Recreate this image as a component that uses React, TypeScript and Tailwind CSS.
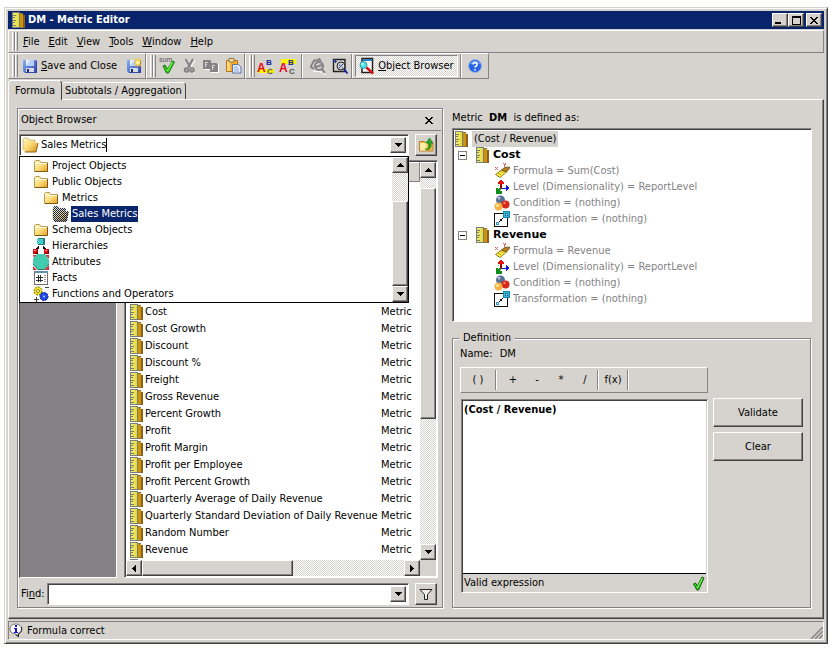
import { useState, type ReactNode } from "react";

const METRICS = [
  "Cost",
  "Cost Growth",
  "Discount",
  "Discount %",
  "Freight",
  "Gross Revenue",
  "Percent Growth",
  "Profit",
  "Profit Margin",
  "Profit per Employee",
  "Profit Percent Growth",
  "Quarterly Average of Daily Revenue",
  "Quarterly Standard Deviation of Daily Revenue",
  "Random Number",
  "Revenue",
];

const MENUS = ["File", "Edit", "View", "Tools", "Window", "Help"];

const raised = "border border-t-white border-l-white border-r-[#848284] border-b-[#848284]";
const button3d =
  "bg-[#d6d3ce] border border-t-white border-l-white border-r-[#424142] border-b-[#424142] shadow-[inset_-1px_-1px_0_#848284]";
const sunken =
  "border border-t-[#848284] border-l-[#848284] border-r-white border-b-white shadow-[inset_1px_1px_0_#424142]";
const groove =
  "border border-[#848284] shadow-[inset_1px_1px_0_#ffffff,1px_1px_0_#ffffff]";
const dither =
  "bg-[repeating-conic-gradient(#ffffff_0_25%,#d6d3ce_0_50%)] bg-[length:2px_2px]";

/* ---------- icons ---------- */

function MetricIcon() {
  return (
    <svg width="13" height="16" viewBox="0 0 13 16" shapeRendering="crispEdges" className="shrink-0">
      <defs>
        <linearGradient id="ruler" x1="0" y1="0" x2="1" y2="0">
          <stop offset="0" stopColor="#f2ec86" />
          <stop offset="1" stopColor="#e4dc30" />
        </linearGradient>
      </defs>
      <path d="M11 3h2v13h-2z" fill="#8c6018" />
      <path d="M7 1h4v15H7z" fill="#8c7442" />
      <path d="M8 2h3v13H8z" fill="#cc9212" />
      <path d="M0 0h8v16H0z" fill="#7b7d7b" />
      <path d="M1 1h6v14H1z" fill="url(#ruler)" />
      <path d="M1 3h3v1H1zM1 5h2v1H1zM1 8h3v1H1zM1 10h2v1H1zM1 13h3v1H1z" fill="#7b7d5a" />
    </svg>
  );
}

function FolderIcon() {
  return (
    <svg width="16" height="16" viewBox="0 0 16 16" className="shrink-0">
      <defs>
        <linearGradient id="folder" x1="0" y1="0" x2="1" y2="1">
          <stop offset="0" stopColor="#fff6c4" />
          <stop offset=".5" stopColor="#fbdc7c" />
          <stop offset="1" stopColor="#e8a020" />
        </linearGradient>
      </defs>
      <path d="M1.500 13.500V3.500l1-1h4l1.500 2H14.500v9z" fill="url(#folder)" stroke="#b59a5a" />
      <path d="M2 5.500h12" stroke="#fffbe0" />
      <path d="M2 13.500h12.500V5" stroke="#7b5a18" fill="none" />
    </svg>
  );
}

function OpenFolderIcon({ selected = false }: { selected?: boolean }) {
  return (
    <svg width="17" height="16" viewBox="0 0 17 16" className="shrink-0">
      <defs>
        <linearGradient id="openFolder" x1="0" y1="0" x2="1" y2="1">
          <stop offset="0" stopColor="#fff7c6" />
          <stop offset=".5" stopColor="#fbd873" />
          <stop offset="1" stopColor="#d68a10" />
        </linearGradient>
        <pattern id="selDots" width="2" height="2" patternUnits="userSpaceOnUse">
          <path d="M0 0h1v1H0zM1 1h1v1H1z" fill="#08246b" shapeRendering="crispEdges" />
        </pattern>
      </defs>
      <path d="M1 13V3l1-2h4l1 2h6v3h3l-2 9H3z" fill="url(#openFolder)" />
      <path d="M1 13V3l1-2h4l1 2h6v3" fill="none" stroke="#d6c083" />
      <path d="M3 15h11l2-9" fill="none" stroke="#8c6518" />
      {selected && <path d="M1 13V3l1-3h4l1 2h7v3h3l-2 11H2z" fill="url(#selDots)" />}
    </svg>
  );
}

function HierarchyIcon() {
  return (
    <svg width="16" height="16" viewBox="0 0 16 16" shapeRendering="crispEdges" className="shrink-0">
      <path d="M5 0h7v7H5z" fill="#297d84" />
      <path d="M4 1h6v5H4z" fill="#4accc6" />
      <path d="M5 8h1v1H5zM4 9h2v1H4zM3 10h3v1H3zM10 8h1v1h-1zM10 9h2v1h-2zM10 10h3v1h-3z" fill="#101010" />
      <path d="M0 11h5v5H0zM11 11h5v5h-5z" fill="#d61010" />
      <path d="M1 12h2v1H1zM12 12h2v1h-2z" fill="#ff9a94" />
      <path d="M4 12h1v4H1v-1h3zM15 12h1v4h-4v-1h3z" fill="#840000" />
    </svg>
  );
}

function AttributeIcon() {
  return (
    <svg width="16" height="16" viewBox="0 0 16 16" className="shrink-0">
      <path d="M0 1h4L1 4zM12 1h4v4zM0 12l4 4H0zM16 11v5h-5z" fill="#d63139" />
      <path d="M4 0h8l4 6v4l-5 6H5L0 10V5z" fill="#42cbad" />
      <path d="M0 10l5 5.500h6l5-5.500" fill="none" stroke="#218273" />
    </svg>
  );
}

function FactIcon() {
  return (
    <svg width="16" height="16" viewBox="0 0 16 16" shapeRendering="crispEdges" className="shrink-0">
      <path d="M1 1h14v14H1z" fill="#737173" />
      <path d="M2 3h12v11H2z" fill="#fff" />
      <path d="M2 1h13v2H2z" fill="#6390ad" />
      <path d="M5 5h1v7H5zM7 5h1v7H7zM3 7h7v1H3zM3 10h7v1H3z" fill="#313031" />
      <path d="M11 5h2v1h-2zM11 7h2v1h-2zM11 9h2v1h-2zM11 11h2v1h-2z" fill="#9c9a9c" />
    </svg>
  );
}

function FunctionIcon() {
  return (
    <svg width="16" height="16" viewBox="0 0 16 16" className="shrink-0">
      <circle cx="5" cy="5" r="4" fill="#f7e729" stroke="#6b6500" strokeDasharray="2 1" />
      <circle cx="5" cy="5" r="1.500" fill="#fff" stroke="#8c8600" />
      <circle cx="11" cy="10.500" r="4" fill="#2149e7" stroke="#001094" strokeDasharray="2 1" />
      <circle cx="11" cy="10.500" r="1" fill="#b5c7ff" />
      <path d="M12 1.500h4M1 13.500h5M3.500 11v5" stroke="#424142" />
    </svg>
  );
}

function FormulaIcon() {
  return (
    <svg width="16" height="16" viewBox="0 0 16 16" className="shrink-0">
      <path d="M1.500 11.500l6-4.500 5 2-6.500 5.500z" fill="#ffef42" stroke="#8c7d29" />
      <path d="M7.500 7l3-2.500 5-.5v1.500l-3 3.500z" fill="#b57918" stroke="#6b5221" strokeWidth=".8" />
      <path d="M4 10.500l3 1M6.500 8.500l3 1.200" stroke="#a59218" strokeWidth=".8" />
      <path d="M1 4l3 3M4 4L1 7M9 0l1.500 1.500M12 0l-1.500 1.500V4" stroke="#ef5a63" />
    </svg>
  );
}

function LevelIcon() {
  return (
    <svg width="16" height="16" viewBox="0 0 16 16" shapeRendering="crispEdges" className="shrink-0">
      <path d="M6 5h2v5H6z" fill="#a50000" />
      <path d="M6 1h2v1h1v1h1v2H4V3h1V2h1z" fill="#e71010" />
      <path d="M8 9h4V6h1v1h1v1h1v2h-1v1h-1v1h-1v-2H8z" fill="#1018e7" />
      <path d="M2 9h2v1h1V9h2v2H6v1h2v3H2z" fill="#108a18" />
      <path d="M4 6h1v1H4z" fill="#42c3c6" />
    </svg>
  );
}

function ConditionIcon() {
  return (
    <svg width="16" height="16" viewBox="0 0 16 16" className="shrink-0">
      <circle cx="6.500" cy="5" r="4.500" fill="#5a6d94" />
      <circle cx="5" cy="3" r="1.500" fill="#b5c3d6" />
      <circle cx="11.500" cy="9.500" r="4" fill="#d62818" />
      <circle cx="10.500" cy="8" r="1.200" fill="#ff8a6b" />
      <circle cx="4.500" cy="11.500" r="4" fill="#f7b242" />
      <circle cx="3.500" cy="10.500" r="1.500" fill="#ffe7a5" />
    </svg>
  );
}

function TransformationIcon() {
  return (
    <svg width="16" height="16" viewBox="0 0 16 16" shapeRendering="crispEdges" className="shrink-0">
      <path d="M0 2h14v14H0z" fill="#101010" />
      <path d="M1 3h12v12H1z" fill="#fff" />
      <path d="M9 0h7v7H9z" fill="#1886ad" />
      <path d="M10 1h5v5h-5z" fill="#31b6de" />
      <path d="M11 2h3v3h-3z" fill="#1886ad" />
      <path d="M12 3h1v1h-1z" fill="#fff" />
      <path d="M2 11h3v3H2z" fill="#2996c6" />
      <path d="M3 12h1v1H3z" fill="#fff" />
      <path d="M5 10h1v1H5zM6 8h2v2H6zM8 7h1v1H8z" fill="#101010" />
    </svg>
  );
}

function FloppyIcon({ star = false }: { star?: boolean }) {
  return (
    <svg width="16" height="16" viewBox="0 0 16 16" className="shrink-0">
      <defs>
        <linearGradient id="floppy" x1="0" y1="0" x2="1" y2="1">
          <stop offset="0" stopColor="#8cb2f7" />
          <stop offset="1" stopColor="#2941ad" />
        </linearGradient>
      </defs>
      <path d="M1 2h13l1 1v12H3l-2-2z" fill="url(#floppy)" />
      <path d="M4 2h8v6H4z" fill="#e7f3ff" />
      <path d="M8 2h4v6H4z" fill="#b5cff7" />
      <path d="M4 10h8v5H4z" fill="#d6dbe7" />
      <path d="M5 11h2v4H5z" fill="#212c6b" />
      <path d="M14.500 3v11.500H3" stroke="#3149a5" fill="none" />
      {star && (
        <g>
          <path d="M12 0v9M7.500 4.500h9M9 1l6 7M15 1L9 8" stroke="#f7c631" strokeWidth="1.300" />
          <circle cx="12" cy="4.500" r="2" fill="#fff3a5" />
        </g>
      )}
    </svg>
  );
}

function CheckIcon() {
  return (
    <svg width="14" height="16" viewBox="0 0 14 16" className="shrink-0">
      <path d="M1.500 9l2-1 2 3 4.500-9 2 1-5.500 12H5z" fill="#31d618" stroke="#085a08" />
      <path d="M5.500 12.500l5-9.500" stroke="#94ff6b" />
    </svg>
  );
}

function SumCheckIcon() {
  return (
    <svg width="18" height="18" viewBox="0 0 18 18" className="shrink-0">
      <text x="1" y="5" fontSize="7" fill="#525152" fontFamily="Liberation Sans">sum</text>
      <path d="M5 9l2-1 2.500 4 5-8 2 1-6 11H8.500z" fill="#31d618" stroke="#086508" strokeWidth=".9" />
      <path d="M9.500 13.500l5-8.500" stroke="#94ff6b" />
    </svg>
  );
}

function CutIcon() {
  return (
    <svg width="14" height="16" viewBox="0 0 14 16" className="shrink-0">
      <path d="M5 2l6 10M13 2L7 12M11 15h2" stroke="#fff" fill="none" />
      <g stroke="#848284" fill="none" strokeWidth="2">
        <path d="M3.500 1l5 8.500M11 1L6 9.500" />
        <circle cx="4.500" cy="12" r="1.800" />
        <circle cx="10" cy="12" r="1.800" />
      </g>
    </svg>
  );
}

function CopyIcon() {
  return (
    <svg width="16" height="16" viewBox="0 0 16 16" shapeRendering="crispEdges" className="shrink-0">
      <path d="M1 3h7v9H1zM8 6h8v9H8z" fill="#fff" />
      <path d="M0 2h7l1 1v8H0zM7 5h6l2 2v7H7z" fill="#848284" />
      <path d="M2 4h3v1H3v1h1v1H3v2H2zM9 7h3v1h-2v1h1v1h-1v2H9z" fill="#d6d3ce" />
    </svg>
  );
}

function PasteIcon() {
  return (
    <svg width="17" height="16" viewBox="0 0 17 16" className="shrink-0">
      <path d="M1.500 2.500h11v11h-11z" fill="#f7ad29" stroke="#b5731a" />
      <path d="M2 3h3v10H2z" fill="#ffd27b" />
      <path d="M4 .5h5V4H4z" fill="#f7e2a5" stroke="#8c7342" />
      <path d="M7.500 6.500h6l2.500 2.500v6H7.500z" fill="#e7efff" stroke="#5a73a5" />
      <path d="M9 9h4M9 11h5M9 13h5" stroke="#8ca6d6" />
    </svg>
  );
}

function LettersIcon({ highlightTop = false }: { highlightTop?: boolean }) {
  return (
    <svg width="18" height="18" viewBox="0 0 18 18" className="shrink-0">
      <path d={highlightTop ? "M2 2h15v5H2z" : "M1 12h16v4H1z"} fill="#fff700" />
      <g fontFamily="Liberation Sans" fontWeight="bold">
        <text x="9" y="8" fontSize="8" fill="#1018a5">B</text>
        <text x="0" y="15" fontSize="12" fill="#e70818">A</text>
        <text x="10" y="17" fontSize="8" fill="#525152">C</text>
      </g>
    </svg>
  );
}

function FindIcon({ disabled = false }: { disabled?: boolean }) {
  if (disabled) {
    return (
      <svg width="18" height="18" viewBox="0 0 18 18" fill="none" className="shrink-0">
        <path d="M4 3.500h4l2-1.500 2 2M3 7l2-3M3 7L2 10l3 2" stroke="#848284" strokeWidth="2" />
        <circle cx="10" cy="9" r="4" stroke="#848284" strokeWidth="2" />
        <path d="M7 10l6-2M13 12l3 4" stroke="#848284" strokeWidth="2" />
        <path d="M4 14.500h6l3 1M14 17h3" stroke="#fff" />
      </svg>
    );
  }
  return (
    <svg width="18" height="18" viewBox="0 0 18 18" fill="none" className="shrink-0">
      <path d="M2.500 2.500h11.500v12H2.500z" stroke="#212021" strokeWidth="1.400" />
      <path d="M2 4.500h4M4.500 2v4" stroke="#2130a5" />
      <circle cx="10" cy="9" r="4" stroke="#212021" fill="#d6d3ce" />
      <path d="M8 11l4-4M8 8h1M11 11h1" stroke="#2130a5" />
      <path d="M13 12l3.500 4.500" stroke="#1828a5" strokeWidth="2" />
    </svg>
  );
}

function ObjectBrowserIcon() {
  return (
    <svg width="16" height="18" viewBox="0 0 16 18" className="shrink-0">
      <path d="M3 1.500h10.500v14H3z" fill="#fff" stroke="#212021" strokeWidth="1.500" />
      <path d="M4 2h9v2H4z" fill="#3182c6" />
      <circle cx="4.500" cy="8" r="3.500" fill="#4ae3e7" stroke="#399aa5" />
      <circle cx="3.500" cy="7" r="1.200" fill="#d6ffff" />
      <path d="M7.500 10.500l6.500 6" stroke="#d61010" strokeWidth="2.500" />
    </svg>
  );
}

function HelpIcon() {
  return (
    <svg width="16" height="16" viewBox="0 0 16 16" className="shrink-0">
      <circle cx="8" cy="8" r="6.500" fill="#2965e7" stroke="#9cb2e7" />
      <path d="M3 6a5.500 5.500 0 0 1 10 0z" fill="#6b9af7" />
      <path d="M6 6.500a2 2 0 1 1 2.800 1.800Q8 8.700 8 9.600M8 11v1.500" fill="none" stroke="#fff" strokeWidth="1.600" />
    </svg>
  );
}

function FolderUpIcon() {
  return (
    <svg width="16" height="16" viewBox="0 0 16 16" className="shrink-0">
      <path d="M1.500 14V4.500h5l1 1.500h7.500v8z" fill="#f7bd42" stroke="#b5822a" />
      <path d="M2 6h7l-1 7.500H2z" fill="#fff0a5" />
      <path d="M7 12c4 .5 4-2 3.500-6H8l3.500-5L15 6h-2c.5 5-1 7.500-6 6z" fill="#29a629" stroke="#107510" strokeWidth=".6" />
    </svg>
  );
}

function InfoIcon() {
  return (
    <svg width="15" height="15" viewBox="0 0 15 15" className="shrink-0">
      <path d="M6.500 1C10 1 12.500 3 12.500 6S10 10.500 9 10.500v3l-3-3C3 10.500 1 9 1 6s2-5 5.500-5z" fill="#fff" stroke="#737173" />
      <path d="M12.500 4c1 4-1 6-3 7v3l-3-3" fill="none" stroke="#212021" />
      <path d="M6 2h2v2H6zM5 5h3v4h1v1H5V9h1V6H5z" fill="#1010e7" />
    </svg>
  );
}

function Arrow({ dir }: { dir: "up" | "down" | "left" | "right" }) {
  const paths = {
    up: "M3 0h1v1h1v1h1v1h1v1H0V3h1V2h1V1h1z",
    down: "M0 0h7v1H6v1H5v1H4v1H3V3H2V2H1V1H0z",
    left: "M4 0v7H3V6H2V5H1V4H0V3h1V2h1V1h1V0z",
    right: "M0 0v7h1V6h1V5h1V4h1V3H3V2H2V1H1V0z",
  };
  return (
    <svg width="7" height="7" viewBox={dir === "left" || dir === "right" ? "-1 0 7 7" : "0 -1 7 7"} shapeRendering="crispEdges">
      <path d={paths[dir]} />
    </svg>
  );
}

function CloseGlyph() {
  return (
    <svg width="8" height="7" viewBox="0 0 8 7" shapeRendering="crispEdges">
      <path d="M0 0h2v1h1v1h2V1h1V0h2v1H7v1H6v1H5v1h1v1h1v1h1v1H6V6H5V5H3v1H2v1H0V6h1V5h1V4h1V3H2V2H1V1H0z" />
    </svg>
  );
}

/* ---------- small pieces ---------- */

function ArrowButton({ dir, label }: { dir: "up" | "down" | "left" | "right"; label: string }) {
  return (
    <button type="button" aria-label={label} className={`flex size-4 shrink-0 items-center justify-center ${button3d}`}>
      <Arrow dir={dir} />
    </button>
  );
}

function Grip() {
  return (
    <div className="ml-[3px] flex self-stretch py-px">
      <div className="w-[3px] border-x border-l-white border-r-[#848284]" />
      <div className="w-[3px] border-x border-l-white border-r-[#848284]" />
    </div>
  );
}

function Separator() {
  return <div className="w-0.5 self-stretch border-l border-r border-l-[#848284] border-r-white" />;
}

function ToolButton({ label, children, className = "w-[22px]" }: { label: string; children: ReactNode; className?: string }) {
  return (
    <button type="button" aria-label={label} className={`flex h-[22px] shrink-0 items-center justify-center ${className}`}>
      {children}
    </button>
  );
}

function Mnemonic({ text, at = 0 }: { text: string; at?: number }) {
  return (
    <span>
      {text.slice(0, at)}
      <span className="underline">{text[at]}</span>
      {text.slice(at + 1)}
    </span>
  );
}

function TitleBar() {
  return (
    <header className="flex h-[18px] shrink-0 items-center bg-[#08246b] pr-0.5 pl-1">
      <MetricIcon />
      <h1 className="ml-[3px] flex-1 text-[11px] font-bold text-white">DM - Metric Editor</h1>
      <button type="button" aria-label="Minimize" className={`flex h-3.5 w-4 items-end justify-center pb-0.5 ${button3d}`}>
        <span className="mr-1 h-0.5 w-1.5 bg-black" />
      </button>
      <button type="button" aria-label="Maximize" className={`flex h-3.5 w-4 items-center justify-center ${button3d}`}>
        <span className="h-[9px] w-[9px] border border-t-2 border-black" />
      </button>
      <button type="button" aria-label="Close" className={`ml-0.5 flex h-3.5 w-4 items-center justify-center ${button3d}`}>
        <CloseGlyph />
      </button>
    </header>
  );
}

function Toolbar() {
  return (
    <div className="flex h-[26px] shrink-0">
      <div className={`flex items-center ${raised}`}>
        <Grip />
        <button type="button" className="ml-1 flex h-[22px] items-center gap-[3px]">
          <FloppyIcon />
          <Mnemonic text="Save and Close" />
        </button>
        <ToolButton label="Save as" className="ml-1.5 w-[22px]"><FloppyIcon star /></ToolButton>
      </div>
      <div className={`flex items-center ${raised}`}>
        <Grip />
        <ToolButton label="Validate sum"><SumCheckIcon /></ToolButton>
        <ToolButton label="Cut"><CutIcon /></ToolButton>
        <ToolButton label="Copy"><CopyIcon /></ToolButton>
        <ToolButton label="Paste"><PasteIcon /></ToolButton>
      </div>
      <div className={`flex items-center ${raised}`}>
        <Grip />
        <ToolButton label="Sort ascending"><LettersIcon /></ToolButton>
        <ToolButton label="Sort descending"><LettersIcon highlightTop /></ToolButton>
        <span className="w-0.5" />
        <Separator />
        <ToolButton label="Search again" className="ml-1 w-[22px]"><FindIcon disabled /></ToolButton>
        <ToolButton label="Search"><FindIcon /></ToolButton>
        <Separator />
        <button
          type="button"
          aria-pressed="true"
          className={`mx-0.5 flex h-[22px] items-center gap-[3px] border border-t-[#848284] border-l-[#848284] border-r-white border-b-white px-[3px] ${dither}`}
        >
          <ObjectBrowserIcon />
          <Mnemonic text="Object Browser" />
        </button>
        <Separator />
        <ToolButton label="Help" className="mx-0.5 w-[22px]"><HelpIcon /></ToolButton>
      </div>
    </div>
  );
}

const FOLDERS: { label: string; indent: string; icon: ReactNode; selected?: boolean }[] = [
  { label: "Project Objects", indent: "pl-[13px]", icon: <FolderIcon /> },
  { label: "Public Objects", indent: "pl-[13px]", icon: <FolderIcon /> },
  { label: "Metrics", indent: "pl-[23px]", icon: <FolderIcon /> },
  { label: "Sales Metrics", indent: "pl-8", icon: <OpenFolderIcon selected />, selected: true },
  { label: "Schema Objects", indent: "pl-[13px]", icon: <FolderIcon /> },
  { label: "Hierarchies", indent: "pl-[13px]", icon: <HierarchyIcon /> },
  { label: "Attributes", indent: "pl-[13px]", icon: <AttributeIcon /> },
  { label: "Facts", indent: "pl-[13px]", icon: <FactIcon /> },
  { label: "Functions and Operators", indent: "pl-[13px]", icon: <FunctionIcon /> },
];

function FolderDropdown() {
  return (
    <div className="absolute top-full right-0 left-0 z-10 flex border border-black bg-white">
      <ul role="listbox" aria-label="Folders" className="flex-1 pt-px">
        {FOLDERS.map((f) => (
          <li
            key={f.label}
            role="option"
            aria-selected={!!f.selected}
            className={`flex h-4 items-center gap-0.5 ${f.indent}`}
          >
            {f.icon}
            <span className={f.selected ? "h-4 bg-[#08246b] px-px leading-4 text-white" : "px-px"}>{f.label}</span>
          </li>
        ))}
      </ul>
      <div className={`flex w-4 flex-col ${dither}`}>
        <ArrowButton dir="up" label="Scroll up" />
        <div className="h-7" />
        <div className={`flex-1 ${button3d}`} />
        <ArrowButton dir="down" label="Scroll down" />
      </div>
    </div>
  );
}

function MetricList() {
  return (
    <div className={`flex min-h-0 flex-1 flex-col bg-white p-px ${sunken}`}>
      <div className="flex min-h-0 flex-1">
        <div className="min-w-0 flex-1 overflow-hidden">
          <div className={`h-5 bg-[#d6d3ce] ${raised}`} />
          <table className="mt-[121px] w-full border-collapse">
            <tbody>
              {[...METRICS, ""].map((name) => (
                <tr key={name} className="h-[17px]">
                  <td className="p-0 pl-1">
                    <div className="flex h-[17px] items-center gap-0.5 whitespace-nowrap">
                      <MetricIcon />
                      {name}
                    </div>
                  </td>
                  <td className="w-10 p-0 pl-px">{name && "Metric"}</td>
                </tr>
              ))}
            </tbody>
          </table>
        </div>
        <div className={`flex w-4 flex-col ${dither}`}>
          <ArrowButton dir="up" label="Scroll up" />
          <div className="h-2.5" />
          <div className={`flex-[230] ${button3d}`} />
          <div className="flex-[126]" />
          <ArrowButton dir="down" label="Scroll down" />
        </div>
      </div>
      <div className="flex h-4 shrink-0">
        <div className={`flex flex-1 ${dither}`}>
          <ArrowButton dir="left" label="Scroll left" />
          <div className={`flex-[151] ${button3d}`} />
          <div className="flex-[112]" />
          <ArrowButton dir="right" label="Scroll right" />
        </div>
        <div className="w-4 bg-[#d6d3ce]" />
      </div>
    </div>
  );
}

function ObjectBrowser() {
  const [folder, setFolder] = useState("Sales Metrics");
  const [find, setFind] = useState("");

  return (
    <section className={`mr-px flex min-h-0 flex-col p-px ${groove}`}>
      <div className="flex h-[21px] shrink-0 items-center justify-between border-b border-[#848284] pr-2 pl-0.5">
        <h2>Object Browser</h2>
        <button type="button" aria-label="Close object browser">
          <CloseGlyph />
        </button>
      </div>

      <div className="relative z-10 mt-[3px] flex h-[22px] shrink-0">
        <div className="relative flex-1">
          <div className={`flex h-[22px] items-center bg-white p-0.5 ${sunken}`}>
            <OpenFolderIcon />
            <input
              aria-label="Current folder"
              role="combobox"
              aria-expanded="true"
              value={folder}
              onChange={(e) => setFolder(e.target.value)}
              className="ml-0.5 field-sizing-content outline-none"
            />
            <span className="h-3.5 w-px bg-black" />
            <span className="flex-1" />
            <ArrowButton dir="down" label="Show folders" />
          </div>
          <FolderDropdown />
        </div>
        <button type="button" aria-label="Up one level" className={`mr-1 ml-1.5 flex size-[22px] items-center justify-center ${button3d}`}>
          <FolderUpIcon />
        </button>
      </div>

      <div className="mt-1 mr-[3px] flex min-h-0 flex-1">
        <div className="mr-[7px] w-[98px] shrink-0 border border-t-[#848284] border-l-[#424142] border-r-white border-b-white bg-[#848284]" />
        <MetricList />
      </div>

      <div className="mt-[5px] mb-px flex h-[22px] shrink-0 items-center">
        <label htmlFor="find" className="w-7 shrink-0 pl-0.5"><Mnemonic text="Find:" at={2} /></label>
        <div className={`flex h-[22px] flex-1 items-center bg-white p-0.5 ${sunken}`}>
          <input
            id="find"
            value={find}
            onChange={(e) => setFind(e.target.value)}
            className="min-w-0 flex-1 px-1 outline-none"
          />
          <ArrowButton dir="down" label="Recent searches" />
        </div>
        <button type="button" aria-label="Filter" className={`mr-1 ml-1.5 flex size-[22px] items-center justify-center ${button3d}`}>
          <svg width="14" height="13" viewBox="0 0 14 13">
            <path d="M1 1.500h12L8.500 6.500v5h-3v-5z" fill="#efefef" stroke="#212021" />
          </svg>
        </button>
      </div>
    </section>
  );
}

function TreeGroup({ name, formula }: { name: string; formula: string }) {
  const details = [
    { icon: <FormulaIcon />, text: `Formula = ${formula}` },
    { icon: <LevelIcon />, text: "Level (Dimensionality) = ReportLevel" },
    { icon: <ConditionIcon />, text: "Condition = (nothing)" },
    { icon: <TransformationIcon />, text: "Transformation = (nothing)" },
  ];
  return (
    <li>
      <div className="flex h-4 items-center pl-[3px]">
        <button type="button" aria-label={`Collapse ${name}`} className="mr-[9px] flex size-[9px] items-center justify-center border border-[#848284]">
          <span className="h-px w-[5px] bg-black" />
        </button>
        <MetricIcon />
        <span className="ml-1 font-['DejaVu_Sans'] font-bold">{name}</span>
      </div>
      <ul>
        {details.map((d) => (
          <li key={d.text} className="flex h-4 items-center gap-[3px] pl-[39px] whitespace-nowrap text-[#848284]">
            {d.icon}
            {d.text}
          </li>
        ))}
      </ul>
    </li>
  );
}

function OperatorButton({ children, className = "w-6" }: { children: ReactNode; className?: string }) {
  return <button type="button" className={`self-stretch ${className}`}>{children}</button>;
}

function Definition() {
  const [expression, setExpression] = useState("(Cost / Revenue)");

  return (
    <section className={`relative mt-4 mr-px flex min-h-0 flex-1 flex-col px-[7px] pt-2 pb-3.5 ${groove}`}>
      <h2 className="absolute -top-2 left-1.5 bg-[#d6d3ce] px-1">Definition</h2>
      <p className="h-4">
        Name: <span className="ml-1">DM</span>
      </p>
      <div className="mt-1 grid min-h-0 flex-1 grid-cols-[1fr_90px] grid-rows-[auto_1fr] gap-[5px]">
        <div className={`flex h-[26px] items-center py-0.5 ${raised}`}>
          <OperatorButton className="w-[34px]">( )</OperatorButton>
          <Separator />
          <span className="w-1" />
          <OperatorButton>+</OperatorButton>
          <OperatorButton>-</OperatorButton>
          <OperatorButton>*</OperatorButton>
          <OperatorButton>/</OperatorButton>
          <Separator />
          <OperatorButton className="w-[28px]">f(x)</OperatorButton>
          <Separator />
        </div>
        <div />
        <div className={`mt-px ml-px flex min-h-0 flex-col p-px ${sunken}`}>
          <textarea
            aria-label="Expression"
            value={expression}
            onChange={(e) => setExpression(e.target.value)}
            className="block min-h-0 flex-1 resize-none bg-white pt-0.5 pl-px font-bold outline-none"
          />
          <div className="flex h-[18px] shrink-0 items-center justify-between border-t border-black pt-px pl-px">
            <span>Valid expression</span>
            <CheckIcon />
          </div>
        </div>
        <div className="flex flex-col gap-[5px]">
          <button type="button" className={`h-[29px] ${button3d}`}>Validate</button>
          <button type="button" className={`h-[29px] ${button3d}`}>Clear</button>
        </div>
      </div>
    </section>
  );
}

export default function App() {
  const [tab, setTab] = useState("formula");

  return (
    <div className="flex h-screen flex-col bg-white pt-[7px] pr-[11px] pb-2.5 pl-1 font-['DejaVu_Sans_Condensed','DejaVu_Sans',sans-serif] text-[11px] leading-[14px] text-black">
      <div className="flex min-h-0 flex-1 flex-col border border-t-[#d6d3ce] border-l-[#d6d3ce] border-r-[#424142] border-b-[#424142] bg-[#d6d3ce] p-[3px] shadow-[inset_1px_1px_0_#ffffff,inset_-1px_-1px_0_#848284]">
        <TitleBar />

        <nav className={`mt-px flex h-[23px] shrink-0 items-center ${raised}`}>
          <Grip />
          {MENUS.map((m) => (
            <button type="button" key={m} className="mr-1 ml-[5px]">
              <Mnemonic text={m} />
            </button>
          ))}
        </nav>

        <Toolbar />

        <div role="tablist" className="flex h-5 shrink-0 items-end">
          <button
            type="button"
            role="tab"
            aria-selected={tab === "formula"}
            onClick={() => setTab("formula")}
            className="relative top-px h-5 rounded-t-sm border border-b-0 border-t-white border-l-white border-r-[#424142] bg-[#d6d3ce] px-1.5"
          >
            Formula
          </button>
          <button
            type="button"
            role="tab"
            aria-selected={tab === "subtotals"}
            onClick={() => setTab("subtotals")}
            className="h-[17px] rounded-t-sm border border-b-0 border-l-0 border-t-white border-r-[#424142] px-[3px]"
          >
            Subtotals / Aggregation
          </button>
        </div>

        <main className={`grid min-h-0 flex-1 grid-cols-[427fr_360fr] grid-rows-[minmax(0,1fr)] gap-2 pt-2 pr-[11px] pb-2.5 pl-2 ${button3d}`}>
          <ObjectBrowser />
          <div className="flex min-h-0 flex-col">
            <p className="mt-[3px] h-[17px] shrink-0 whitespace-pre">
              Metric  <b>DM</b>  is defined as:
            </p>
            <ul className={`h-[194px] shrink-0 bg-white p-0.5 ${sunken}`}>
              <li className="flex h-4 items-center">
                <MetricIcon />
                <span className="ml-1 h-4 bg-[#d6d3ce] px-0.5 leading-4">(Cost / Revenue)</span>
              </li>
              <TreeGroup name="Cost" formula="Sum(Cost)" />
              <TreeGroup name="Revenue" formula="Revenue" />
            </ul>
            <Definition />
          </div>
        </main>

        <footer className="mt-0.5 flex h-[19px] shrink-0 items-center border border-t-[#848284] border-l-[#848284] border-r-white border-b-white">
          <InfoIcon />
          <span className="ml-[3px] flex-1">Formula correct</span>
          <svg width="12" height="12" viewBox="0 0 12 12" className="self-end">
            <path d="M0 12L12 0M4 12l8-8M8 12l4-4" stroke="#848284" strokeWidth="1.500" />
          </svg>
        </footer>
      </div>
    </div>
  );
}
